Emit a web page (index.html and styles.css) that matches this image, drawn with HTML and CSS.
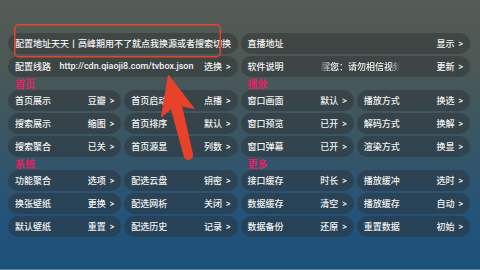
FILE: index.html
```html
<!DOCTYPE html>
<html lang="zh-CN">
<head>
<meta charset="utf-8">
<title>设置</title>
<link rel="stylesheet" href="styles.css">
</head>
<body>
<div class="screen">
  <div class="top">
    <div class="pill pill-wide"><span class="label">配置地址天天丨高峰期用不了就点我换源或者搜索切换</span></div>
    <div class="pill"><span class="label">直播地址</span><span class="value">显示<i>&gt;</i></span></div>
    <div class="pill"><span class="label">配置线路</span><span class="url">http://cdn.qiaoji8.com/tvbox.json</span><span class="value">选换<i>&gt;</i></span></div>
    <div class="pill"><span class="label">软件说明</span><span class="mq-wrap"><span class="mq"><span class="mq-text">醒您：请勿相信视频中的广告</span></span></span><span class="value">更新<i>&gt;</i></span></div>
  </div>
  <div class="sections">
    <div class="section">
      <div class="section-title">首页</div>
      <div class="grid">
        <div class="pill"><span class="label">首页展示</span><span class="value">豆瓣<i>&gt;</i></span></div>
        <div class="pill"><span class="label">首页启动</span><span class="value">点播<i>&gt;</i></span></div>
        <div class="pill"><span class="label">搜索展示</span><span class="value">缩图<i>&gt;</i></span></div>
        <div class="pill"><span class="label">首页排序</span><span class="value">默认<i>&gt;</i></span></div>
        <div class="pill"><span class="label">搜索聚合</span><span class="value">已关<i>&gt;</i></span></div>
        <div class="pill"><span class="label">首页源显</span><span class="value">列数<i>&gt;</i></span></div>
      </div>
    </div>
    <div class="section">
      <div class="section-title">播放</div>
      <div class="grid">
        <div class="pill"><span class="label">窗口画面</span><span class="value">默认<i>&gt;</i></span></div>
        <div class="pill"><span class="label">播放方式</span><span class="value">换选<i>&gt;</i></span></div>
        <div class="pill"><span class="label">窗口预览</span><span class="value">已开<i>&gt;</i></span></div>
        <div class="pill"><span class="label">解码方式</span><span class="value">换解<i>&gt;</i></span></div>
        <div class="pill"><span class="label">窗口弹幕</span><span class="value">已开<i>&gt;</i></span></div>
        <div class="pill"><span class="label">渲染方式</span><span class="value">换显<i>&gt;</i></span></div>
      </div>
    </div>
    <div class="section">
      <div class="section-title">系统</div>
      <div class="grid">
        <div class="pill"><span class="label">功能聚合</span><span class="value">选项<i>&gt;</i></span></div>
        <div class="pill"><span class="label">配选云盘</span><span class="value">钥密<i>&gt;</i></span></div>
        <div class="pill"><span class="label">换张壁纸</span><span class="value">更换<i>&gt;</i></span></div>
        <div class="pill"><span class="label">配选网析</span><span class="value">关闭<i>&gt;</i></span></div>
        <div class="pill"><span class="label">默认壁纸</span><span class="value">重置<i>&gt;</i></span></div>
        <div class="pill"><span class="label">配选历史</span><span class="value">记录<i>&gt;</i></span></div>
      </div>
    </div>
    <div class="section">
      <div class="section-title">更多</div>
      <div class="grid">
        <div class="pill"><span class="label">接口缓存</span><span class="value">时长<i>&gt;</i></span></div>
        <div class="pill"><span class="label">播放缓冲</span><span class="value">选时<i>&gt;</i></span></div>
        <div class="pill"><span class="label">数据缓存</span><span class="value">清空<i>&gt;</i></span></div>
        <div class="pill"><span class="label">播放缓存</span><span class="value">自动<i>&gt;</i></span></div>
        <div class="pill"><span class="label">数据备份</span><span class="value">还原<i>&gt;</i></span></div>
        <div class="pill"><span class="label">重置数据</span><span class="value">初始<i>&gt;</i></span></div>
      </div>
    </div>
  </div>
  <svg class="annot" width="480" height="270" viewBox="0 0 480 270" aria-hidden="true">
    <rect x="14.75" y="24.75" width="205.5" height="32" rx="4" ry="4" fill="none" stroke="#e5432c" stroke-width="1.5"/>
    <g transform="translate(168.5 75.5) rotate(-14)">
      <path d="M0 0 L16.5 38 L5.2 32.5 L4.2 82 A4.2 4.2 0 0 1 -4.2 82 L-5.2 32.5 L-16.5 38 Z" fill="#e8422b" stroke="#e8422b" stroke-width="1.2" stroke-linejoin="round"/>
    </g>
  </svg>
</div>
</body>
</html>
```

FILE: styles.css
```css
html, body {
  margin: 0;
  padding: 0;
}

body {
  width: 480px;
  height: 270px;
  overflow: hidden;
  font-family: "Noto Sans CJK SC", "Noto Sans", sans-serif;
  font-size: 9px;
  color: #f3f3f3;
}

.screen {
  position: relative;
  height: 270px;
  box-sizing: border-box;
  padding: 33px 10px 0 8px;
  background: linear-gradient(180deg, #565b55 0%, #4d5855 22%, #3a5663 50%, #24537a 80%, #1b5279 100%);
  border-bottom: 1px solid #5f8098;
}

.top {
  display: grid;
  grid-template-columns: 1fr 1fr;
  gap: 2px 3px;
}

.pill {
  display: flex;
  align-items: center;
  height: 21px;
  box-sizing: border-box;
  padding: 0 7px;
  border-radius: 11px;
  background: rgba(44, 46, 48, 0.45);
  white-space: nowrap;
  line-height: 1;
  font-weight: 500;
}

.pill-wide {
  padding-right: 4px;
}

.label {
  flex: none;
}

.value {
  margin-left: auto;
  flex: none;
}

.value i {
  font-style: normal;
  font-family: "Noto Sans", sans-serif;
  font-size: 8px;
  margin-left: 4px;
  font-weight: 700;
}

.url {
  flex: 1;
  text-align: center;
  font-family: Roboto, "Noto Sans", sans-serif;
  font-weight: 500;
  font-size: 9px;
  padding-right: 2px;
}

.mq-wrap {
  flex: 1;
  display: flex;
  justify-content: center;
}

.mq {
  width: 80px;
  overflow: hidden;
  -webkit-mask-image: linear-gradient(90deg, transparent 0, rgba(0,0,0,0.3) 3px, #000 12px, #000 70px, transparent 80px);
  mask-image: linear-gradient(90deg, transparent 0, rgba(0,0,0,0.3) 3px, #000 12px, #000 70px, transparent 80px);
}

.mq-text {
  display: inline-block;
  padding-left: 1px;
}

.sections {
  display: grid;
  grid-template-columns: 1fr 1fr;
  column-gap: 3px;
}

.section-title {
  height: 13px;
  line-height: 13px;
  font-size: 10px;
  font-weight: 700;
  color: #e91e63;
  padding-left: 7px;
}

.grid {
  display: grid;
  grid-template-columns: 1fr 1fr;
  gap: 2px 3px;
}

.annot {
  position: absolute;
  left: 0;
  top: 0;
  pointer-events: none;
}
```
